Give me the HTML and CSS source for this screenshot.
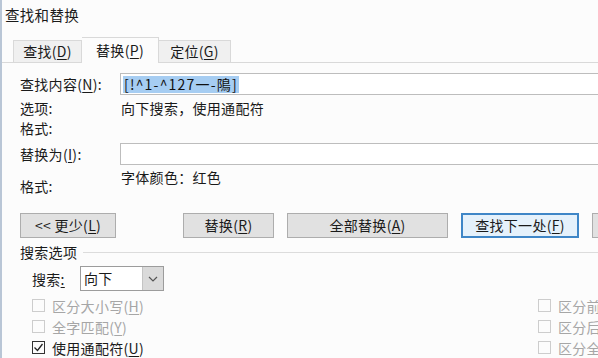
FILE: index.html
```html
<!DOCTYPE html>
<html lang="zh-CN">
<head>
<meta charset="utf-8">
<title>查找和替换</title>
<link rel="stylesheet" href="styles.css">
</head>
<body>
<div class="dialog">
  <div class="title">查找和替换</div>
  <div class="tabs">
    <div class="tab">查找(<u>D</u>)</div>
    <div class="tab active">替换(<u>P</u>)</div>
    <div class="tab">定位(<u>G</u>)</div>
  </div>
  <div class="panel">
    <div class="field">
      <span class="label">查找内容(<u>N</u>):</span>
      <div class="input"><span class="sel">[!^1-^127一-隝]</span></div>
    </div>
    <div class="info">
      <span class="label">选项:</span>
      <span class="value">向下搜索，使用通配符</span>
    </div>
    <div class="info">
      <span class="label">格式:</span>
      <span class="value"></span>
    </div>
    <div class="field second">
      <span class="label">替换为(<u>I</u>):</span>
      <div class="input"></div>
    </div>
    <div class="info fmt">
      <span class="label">格式:</span>
      <span class="value">字体颜色：红色</span>
    </div>
    <div class="buttons">
      <button class="btn less">&lt;&lt; 更少(<u>L</u>)</button>
      <button class="btn replace">替换(<u>R</u>)</button>
      <button class="btn all">全部替换(<u>A</u>)</button>
      <button class="btn next">查找下一处(<u>F</u>)</button>
      <button class="btn cancel"></button>
    </div>
    <div class="group">
      <span>搜索选项</span>
      <span class="rule"></span>
    </div>
    <div class="options">
      <div class="search">
        <span class="slabel">搜索<u>:</u></span>
        <div class="select">
          <span class="svalue">向下</span>
          <span class="arrow"><svg width="10" height="6" viewBox="0 0 10 6"><path d="M1 1 L5 5 L9 1" fill="none" stroke="#555" stroke-width="1.2"/></svg></span>
        </div>
      </div>
      <div class="checks">
        <label class="check disabled"><span class="box"></span><span>区分大小写(<u>H</u>)</span></label>
        <label class="check disabled"><span class="box"></span><span>区分前缀(<u>X</u>)</span></label>
        <label class="check disabled"><span class="box"></span><span>全字匹配(<u>Y</u>)</span></label>
        <label class="check disabled"><span class="box"></span><span>区分后缀(<u>T</u>)</span></label>
        <label class="check"><span class="box checked"><svg width="13" height="13" viewBox="0 0 13 13"><path d="M2.5 6.5 L5.5 9.5 L10.5 3" fill="none" stroke="#222" stroke-width="1.3"/></svg></span><span>使用通配符(<u>U</u>)</span></label>
        <label class="check disabled"><span class="box"></span><span>区分全/半角(<u>M</u>)</span></label>
      </div>
    </div>
  </div>
</div>
</body>
</html>
```
FILE: styles.css
```css
html, body {
  margin: 0;
  padding: 0;
  background: #fcfcfc;
  overflow: hidden;
}
body {
  font-family: "Noto Sans CJK SC", "Noto Sans", sans-serif;
  font-size: 14px;
  color: #1a1a1a;
  letter-spacing: 0.3px;
}
u {
  text-decoration: underline;
  text-underline-offset: 2px;
}
.dialog {
  width: 660px;
  height: 358px;
  border-left: 2px solid #b9c6d6;
  box-sizing: border-box;
}
.title {
  height: 30px;
  line-height: 30px;
  padding-left: 3px;
  font-size: 14.5px;
}
.tabs {
  display: flex;
  align-items: flex-end;
  height: 32px;
  padding-left: 11px;
}
.tab {
  box-sizing: border-box;
  height: 22px;
  line-height: 20px;
  padding: 0 6px;
  border: 1px solid #d9d9d9;
  border-bottom: none;
  background: #f0f0f0;
  text-align: center;
}
.tab:first-child { width: 69px; }
.tab:nth-child(3) { width: 72px; border-left: none; }
.tab.active {
  width: 77px;
  height: 26px;
  line-height: 24px;
  background: #fcfcfc;
  border-left: none;
  margin-bottom: -1px;
  position: relative;
}
.panel {
  border-top: 1px solid #d9d9d9;
  padding-left: 18px;
}
.field {
  display: flex;
  align-items: center;
  margin-top: 10px;
  height: 22px;
}
.field.second { margin-top: 5px; }
.label {
  width: 100px;
  flex: none;
  line-height: 20px;
}
.input {
  flex: 1;
  box-sizing: border-box;
  height: 22px;
  border: 1px solid #bdbdbd;
  background: #fff;
  padding: 1px 2px;
  display: flex;
  align-items: center;
}
.sel {
  background: #a6cdf2;
  line-height: 17px;
  padding: 0 1px;
  color: #111;
  letter-spacing: 1.2px;
}
.info {
  display: flex;
  height: 20px;
  line-height: 20px;
}
.info:nth-of-type(2) { margin-top: 3px; }
.info .value { padding-left: 1px; }
.fmt {
  height: 30px;
  align-items: flex-start;
  margin-top: 2px;
}
.fmt .label { padding-top: 9px; }
.buttons {
  display: flex;
  margin-top: 16px;
  gap: 13px;
}
.btn {
  flex: none;
  font: inherit;
  letter-spacing: 0.3px;
  color: #1a1a1a;
  box-sizing: border-box;
  height: 25px;
  line-height: 21px;
  padding: 0;
  border: 1px solid #adadad;
  background: #e1e1e1;
  text-align: center;
}
.btn.less { width: 96px; margin-right: 54px; }
.btn.replace { width: 91px; }
.btn.all { width: 161px; }
.btn.next {
  width: 118px;
  border: 2px solid #3f86c7;
  background: #e5f1fb;
}
.btn.cancel { width: 80px; }
.group {
  display: flex;
  align-items: center;
  height: 20px;
  margin-top: 4px;
  gap: 6px;
}
.group .rule {
  flex: 1;
  height: 1px;
  background: #dcdcdc;
}
.options { padding-left: 12px; }
.search {
  display: flex;
  align-items: center;
  margin-top: 4px;
  height: 25px;
}
.slabel { width: 48px; flex: none; }
.select {
  width: 84px;
  height: 25px;
  box-sizing: border-box;
  border: 1px solid #9c9c9c;
  background: #fff;
  display: flex;
}
.svalue {
  flex: 1;
  padding-left: 3px;
  line-height: 23px;
}
.arrow {
  width: 20px;
  background: #dadada;
  border-left: 1px solid #c4c4c4;
  display: flex;
  align-items: center;
  justify-content: center;
}
.checks {
  display: grid;
  grid-template-columns: 506px auto;
  grid-auto-rows: 21px;
  margin-top: 4px;
}
.check {
  display: flex;
  align-items: center;
  gap: 7px;
  white-space: nowrap;
}
.check.disabled { color: #a6a6a6; }
.box {
  width: 13px;
  height: 13px;
  box-sizing: border-box;
  border: 1px solid #cdcdcd;
  background: #fcfcfc;
  display: block;
  flex: none;
}
.box.checked {
  border-color: #333;
}
.box svg { display: block; margin: -1px; }
```
